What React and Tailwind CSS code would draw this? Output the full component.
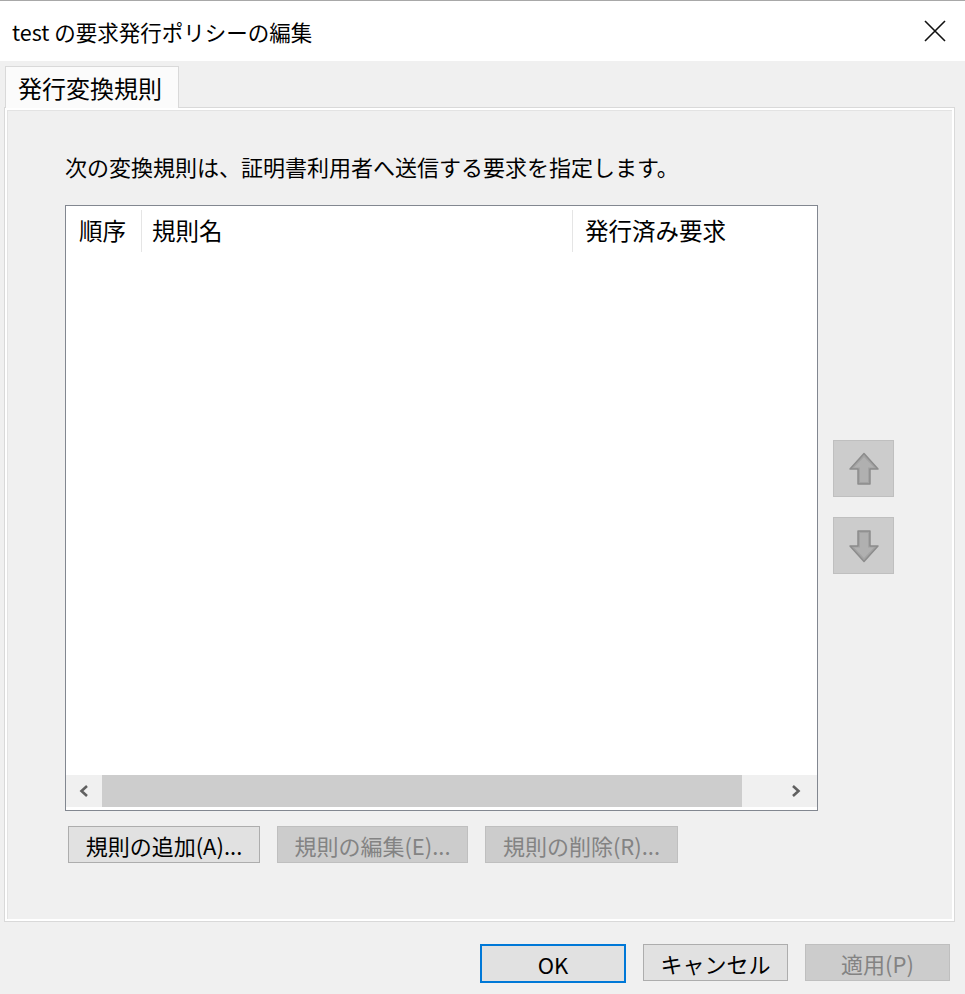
import React from 'react';

const font = { fontFamily: '"Noto Sans CJK JP", "Noto Sans", sans-serif' };

function Arrow({ down }) {
    return (
        <svg width="32" height="34" viewBox="0 0 32 34" className={down ? 'rotate-180' : ''}>
            <polygon
                points="16,1.5 30,17 22,17 22,32 10,32 10,17 2,17"
                fill="#a3a3a3"
                stroke="#8c8c8c"
                strokeWidth="1.5"
                strokeLinejoin="round"
            />
            <polygon points="16,5 26,15.5 20,15.5 20,30 12,30 12,15.5 6,15.5" fill="#b0b0b0" />
        </svg>
    );
}

function Btn({ children, disabled, primary, className }) {
    const base = 'h-[37px] flex items-center justify-center text-[22px] leading-none';
    if (disabled) {
        return <div className={`${base} bg-[#cccccc] border border-[#bfbfbf] text-[#838383] ${className}`}>{children}</div>;
    }
    if (primary) {
        return <div className={`${base} bg-[#e1e1e1] border-2 border-[#0078d7] text-black ${className}`}>{children}</div>;
    }
    return <div className={`${base} bg-[#e1e1e1] border border-[#adadad] text-black ${className}`}>{children}</div>;
}

export default function App() {
    return (
        <div className="w-[965px] h-[994px] bg-[#f0f0f0] flex flex-col text-black" style={font}>
            {/* title bar */}
            <div className="h-[61px] bg-white border-t border-[#a8a8a8] flex items-center justify-between pl-[12px] pr-[19px] shrink-0">
                <span className="text-[21.5px] leading-none mt-[2px]">test の要求発行ポリシーの編集</span>
                <svg width="22" height="22" viewBox="0 0 22 22">
                    <path d="M1 1 L21 21 M21 1 L1 21" stroke="#111" strokeWidth="1.6" />
                </svg>
            </div>

            {/* tab strip */}
            <div className="pl-[5px] pt-[5px] flex">
                <div className="w-[174px] h-[42px] bg-[#fbfbfb] border border-b-0 border-[#d9d9d9] flex items-center pl-[12px] text-[24px] leading-none relative z-10">
                    発行変換規則
                </div>
            </div>

            {/* tab panel */}
            <div className="ml-[4px] w-[951px] h-[815px] -mt-px border border-[#d9d9d9] bg-white p-[2px] shrink-0">
                <div className="w-full h-full bg-[#f0f0f0] border-l border-t border-[#e3e3e3] pl-[57px] pt-[40px]">
                    <div className="h-[30px] flex items-center text-[22px] leading-none">
                        次の変換規則は、証明書利用者へ送信する要求を指定します。
                    </div>

                    <div className="flex mt-[24px]">
                        {/* list view */}
                        <div className="w-[753px] h-[606px] border border-[#828790] bg-white flex flex-col">
                            <div className="h-[48px] flex items-stretch text-[23.5px] leading-none pt-[2px]">
                                <div className="w-[76px] flex items-center pl-[13px] border-r border-[#e5e5e5] my-[2px]">順序</div>
                                <div className="w-[431px] flex items-center pl-[10px] border-r border-[#e5e5e5] my-[2px]">規則名</div>
                                <div className="flex-1 flex items-center pl-[12px]">発行済み要求</div>
                            </div>
                            <div className="flex-1" />
                            <div className="h-[32px] mb-[3px] flex bg-[#f0f0f0] items-center">
                                <div className="w-[36px] h-full flex items-center justify-center">
                                    <svg width="12" height="14" viewBox="0 0 12 14">
                                        <path d="M9 2 L3.5 7 L9 12" stroke="#606060" strokeWidth="2.6" fill="none" />
                                    </svg>
                                </div>
                                <div className="w-[640px] h-full bg-[#cdcdcd]" />
                                <div className="flex-1 h-full flex items-center justify-center pl-[32px]">
                                    <svg width="12" height="14" viewBox="0 0 12 14">
                                        <path d="M3 2 L8.5 7 L3 12" stroke="#606060" strokeWidth="2.6" fill="none" />
                                    </svg>
                                </div>
                            </div>
                        </div>

                        {/* order buttons */}
                        <div className="ml-[15px] pt-[235px] flex flex-col gap-[20px]">
                            <div className="w-[61px] h-[57px] bg-[#cccccc] border border-[#bfbfbf] flex items-center justify-center">
                                <Arrow />
                            </div>
                            <div className="w-[61px] h-[57px] bg-[#cccccc] border border-[#bfbfbf] flex items-center justify-center">
                                <Arrow down />
                            </div>
                        </div>
                    </div>

                    <div className="flex mt-[15px] gap-[17px] ml-[3px]">
                        <Btn className="w-[192px]">規則の追加(A)...</Btn>
                        <Btn disabled className="w-[191px]">規則の編集(E)...</Btn>
                        <Btn disabled className="w-[193px]">規則の削除(R)...</Btn>
                    </div>
                </div>
            </div>

            {/* footer */}
            <div className="flex justify-end pr-[15px] mt-[22px] gap-[17px]">
                <Btn primary className="w-[146px] h-[39px]">OK</Btn>
                <Btn className="w-[145px]">キャンセル</Btn>
                <Btn disabled className="w-[145px]">適用(P)</Btn>
            </div>
        </div>
    );
}
